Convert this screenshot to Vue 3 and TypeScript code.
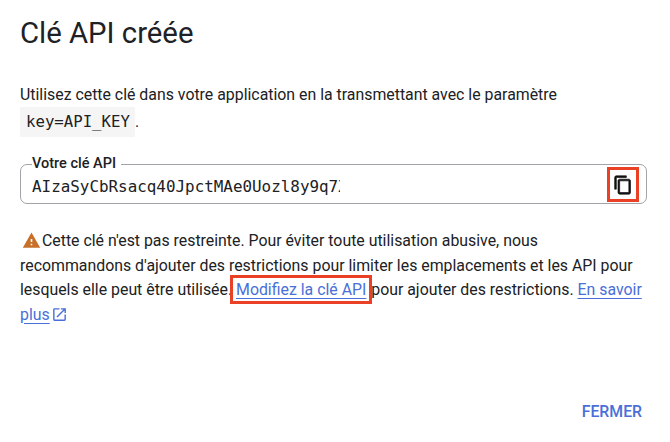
<script setup lang="ts">
const apiKey = 'AIzaSyCbRsacq40JpctMAe0Uozl8y9q7Xk2'
</script>

<template>
  <div class="dialog">
    <h1 class="title">Clé API créée</h1>
    <p class="intro">
      Utilisez cette clé dans votre application en la transmettant avec le paramètre
      <code class="param">key=API_KEY</code>.
    </p>

    <fieldset class="key-field">
      <legend class="key-legend">Votre clé API</legend>
      <div class="key-row">
        <span class="key-value">{{ apiKey }}</span>
        <span class="copy-btn">
          <svg width="20" height="20" viewBox="0 0 24 24" fill="#111" stroke="#111" stroke-width="0.8">
            <path d="M16 1H4c-1.100 0-2 .9-2 2v14h2V3h12V1zm3 4H8c-1.100 0-2 .9-2 2v14c0 1.100.9 2 2 2h11c1.100 0 2-.9 2-2V7c0-1.100-.9-2-2-2zm0 16H8V7h11v14z" />
          </svg>
        </span>
      </div>
    </fieldset>

    <p class="warning">
      <svg class="warn-icon" width="19" height="19" viewBox="0 0 24 24" fill="#c8702a">
        <path d="M1 21h22L12 2 1 21zm12-3h-2v-2h2v2zm0-4h-2v-4h2v4z" />
      </svg>Cette clé n'est pas restreinte. Pour éviter toute utilisation abusive, nous
      recommandons d'ajouter des restrictions pour limiter les emplacements et les API pour
      lesquels elle peut être utilisée.
      <a class="link link--boxed">Modifiez la clé API</a>
      pour ajouter des restrictions.
      <a class="link">En savoir plus</a>
      <svg class="ext-icon" width="17" height="17" viewBox="0 0 24 24" fill="#4a6fd8">
        <path d="M19 19H5V5h7V3H5c-1.110 0-2 .9-2 2v14c0 1.100.89 2 2 2h14c1.100 0 2-.9 2-2v-7h-2v7zM14 3v2h3.590l-9.830 9.830 1.410 1.410L19 6.410V10h2V3h-7z" />
      </svg>
    </p>

    <div class="actions">
      <span class="close-btn">FERMER</span>
    </div>
  </div>
</template>

<style scoped>
.dialog {
  width: 670px;
  height: 442px;
  box-sizing: border-box;
  padding: 13px 23px 0 20px;
  background: #fff;
  color: #202124;
  font-family: Roboto, "Liberation Sans", sans-serif;
  display: flex;
  flex-direction: column;
}

.title {
  margin: 0;
  font-size: 29.3px;
  font-weight: 400;
  line-height: 40px;
}

.intro {
  margin: 29px 0 0;
  font-size: 15.87px;
  line-height: 25px;
}

.param {
  display: inline-block;
  padding: 0 5px 0 6px;
  background: #f5f5f5;
  font-family: "DejaVu Sans Mono", "Liberation Mono", monospace;
  font-size: 15.7px;
  line-height: 30px;
}

.key-field {
  margin: 19px 0 0;
  padding: 0 7px 0 11px;
  height: 48px;
  box-sizing: border-box;
  border: 1.500px solid #a0a3a7;
  border-radius: 7px;
  min-width: 0;
}

.key-legend {
  padding: 0 5px 0 0;
  font-size: 14.5px;
  font-weight: 500;
  line-height: 16px;
}

.key-row {
  display: flex;
  align-items: center;
  justify-content: space-between;
  margin-top: -5px;
}

.key-value {
  width: 308px;
  margin-top: 4px;
  overflow: hidden;
  white-space: nowrap;
  font-family: "DejaVu Sans Mono", "Liberation Mono", monospace;
  font-size: 15.9px;
  line-height: 24px;
}

.copy-btn {
  display: flex;
  align-items: center;
  justify-content: center;
  width: 32px;
  height: 35px;
  box-sizing: border-box;
  border: 3px solid #ea4126;
}

.warning {
  margin: 25px 0 0;
  font-size: 15.87px;
  line-height: 24.500px;
}

.warn-icon {
  vertical-align: -4px;
  margin: 0 1px 0 2px;
}

.ext-icon {
  vertical-align: -3px;
  margin-left: 1px;
}

.link {
  color: #4a6fd8;
  text-decoration: underline;
  text-underline-offset: 3px;
}

.link--boxed {
  margin: 0 0 0 -1px;
  padding: 0 1px;
  outline: 3px solid #ea4126;
  outline-offset: 2px;
}

.actions {
  margin-top: auto;
  padding: 0 5px 18px 0;
  display: flex;
  justify-content: flex-end;
}

.close-btn {
  color: #4a6fd8;
  font-size: 15.8px;
  font-weight: 500;
  line-height: 24px;
}
</style>
